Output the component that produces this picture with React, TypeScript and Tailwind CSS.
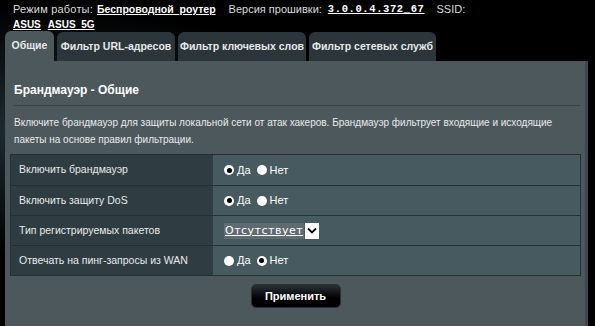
import React from "react";

const sans = { fontFamily: '"Liberation Sans", Arial, sans-serif' };
const dejavu = { fontFamily: '"DejaVu Sans", "Noto Sans", sans-serif' };

function Radio({ checked }: { checked: boolean }) {
  return (
    <span className="inline-flex h-[10px] w-[10px] items-center justify-center rounded-full bg-white">
      {checked && <span className="h-[5px] w-[5px] rounded-full bg-black" />}
    </span>
  );
}

function YesNo({ yes }: { yes: boolean }) {
  return (
    <div className="flex items-center text-[11px] text-white" style={sans}>
      <Radio checked={yes} />
      <span className="ml-[3px] mr-[6px]">Да</span>
      <Radio checked={!yes} />
      <span className="ml-[3px]">Нет</span>
    </div>
  );
}

const rows: { label: string; value: React.ReactNode }[] = [
  { label: "Включить брандмауэр", value: <YesNo yes /> },
  { label: "Включить защиту DoS", value: <YesNo yes /> },
  {
    label: "Тип регистрируемых пакетов",
    value: (
      <div className="flex items-center">
        <span className="bg-[#5f6b70] px-[1px] text-[11px] leading-[16px] tracking-[0.5px] text-white underline" style={dejavu}>
          Отсутствует
        </span>
        <span className="ml-[1px] flex h-[16px] w-[14px] items-center justify-center bg-white">
          <svg width="10" height="7" viewBox="0 0 10 7">
            <path d="M1 1.5 L5 5.5 L9 1.5" fill="none" stroke="#000" strokeWidth="1.8" />
          </svg>
        </span>
      </div>
    ),
  },
  { label: "Отвечать на пинг-запросы из WAN", value: <YesNo yes={false} /> },
];

const tabs = [
  { label: "Фильтр URL-адресов", w: "w-[118px]" },
  { label: "Фильтр ключевых слов", w: "w-[128px]" },
  { label: "Фильтр сетевых служб", w: "w-[127px]" },
];

export default function App() {
  return (
    <div className="h-[326px] w-[595px] overflow-hidden bg-black bg-[radial-gradient(ellipse_at_0%_40%,#1c2a30_0%,#000_45%)]">
      <div className="whitespace-nowrap px-[13px] pt-[2px] text-[11px] leading-[15px] text-[#d8dcdd]" style={sans}>
        <div className="flex items-center">
          <span className="tracking-[0.2px]">Режим работы:</span>
          <span className="ml-[4px] text-[10.5px] font-bold text-white underline">Беспроводной_роутер</span>
          <span className="ml-[13px]">Версия прошивки:</span>
          <span
            className="ml-[6px] text-[10.5px] font-bold tracking-[0.6px] text-white underline"
            style={{ fontFamily: '"Liberation Mono", "DejaVu Sans Mono", monospace' }}
          >
            3.0.0.4.372_67
          </span>
          <span className="ml-[12px]">SSID:</span>
        </div>
        <div className="flex items-center gap-[7px] text-[10px] font-bold text-white underline">
          <span>ASUS</span>
          <span>ASUS_5G</span>
        </div>
      </div>

      <div className="ml-[5px] mt-[-1px] flex items-end gap-[3px] whitespace-nowrap text-[10.5px] font-bold text-[#e6e9ea]" style={sans}>
        <div className="flex h-[30px] w-[49px] items-center justify-center rounded-t-[6px] bg-[#4d585c]">Общие</div>
        {tabs.map((t) => (
          <div key={t.label} className={`flex h-[29px] ${t.w} items-center justify-center rounded-t-[6px] bg-[#2c3539]`}>
            {t.label}
          </div>
        ))}
      </div>

      <div className="ml-[5px] h-[265px] w-[583px] border-r-[3px] border-[#3e474b] bg-[#4d585c] pl-[5px] pr-[4px] pt-[21px]">
        <div className="pl-[4px] text-[12px] font-bold leading-[16px] text-white" style={sans}>
          Брандмауэр - Общие
        </div>
        <div className="ml-[4px] mr-[1px] mt-[7px] h-[1px] bg-[#3a4448]" />
        <div className="whitespace-nowrap pl-[4px] pt-[8px] text-[10px] leading-[17px] text-[#e8ebec]" style={sans}>
          Включите брандмауэр для защиты локальной сети от атак хакеров. Брандмауэр фильтрует входящие и исходящие
          <br />
          пакеты на основе правил фильтрации.
        </div>
        <div className="mt-[6px] border border-[#243034]">
          {rows.map((r, i) => (
            <div key={r.label} className={`flex h-[30px] ${i > 0 ? "border-t border-[#243034]" : ""}`}>
              <div className="flex w-[202px] items-center bg-[#2f3c41] pl-[8px] text-[10.5px] text-[#e8ebec]" style={sans}>
                {r.label}
              </div>
              <div className="flex flex-1 items-center bg-[#475a60] pl-[11px]">{r.value}</div>
            </div>
          ))}
        </div>
        <div className="mt-[8px] flex justify-center">
          <button
            className="h-[24px] w-[90px] rounded-[5px] border border-[#2a3236] bg-[linear-gradient(#2a3236,#000_60%)] text-[11px] font-bold text-white"
            style={sans}
          >
            Применить
          </button>
        </div>
      </div>
    </div>
  );
}
